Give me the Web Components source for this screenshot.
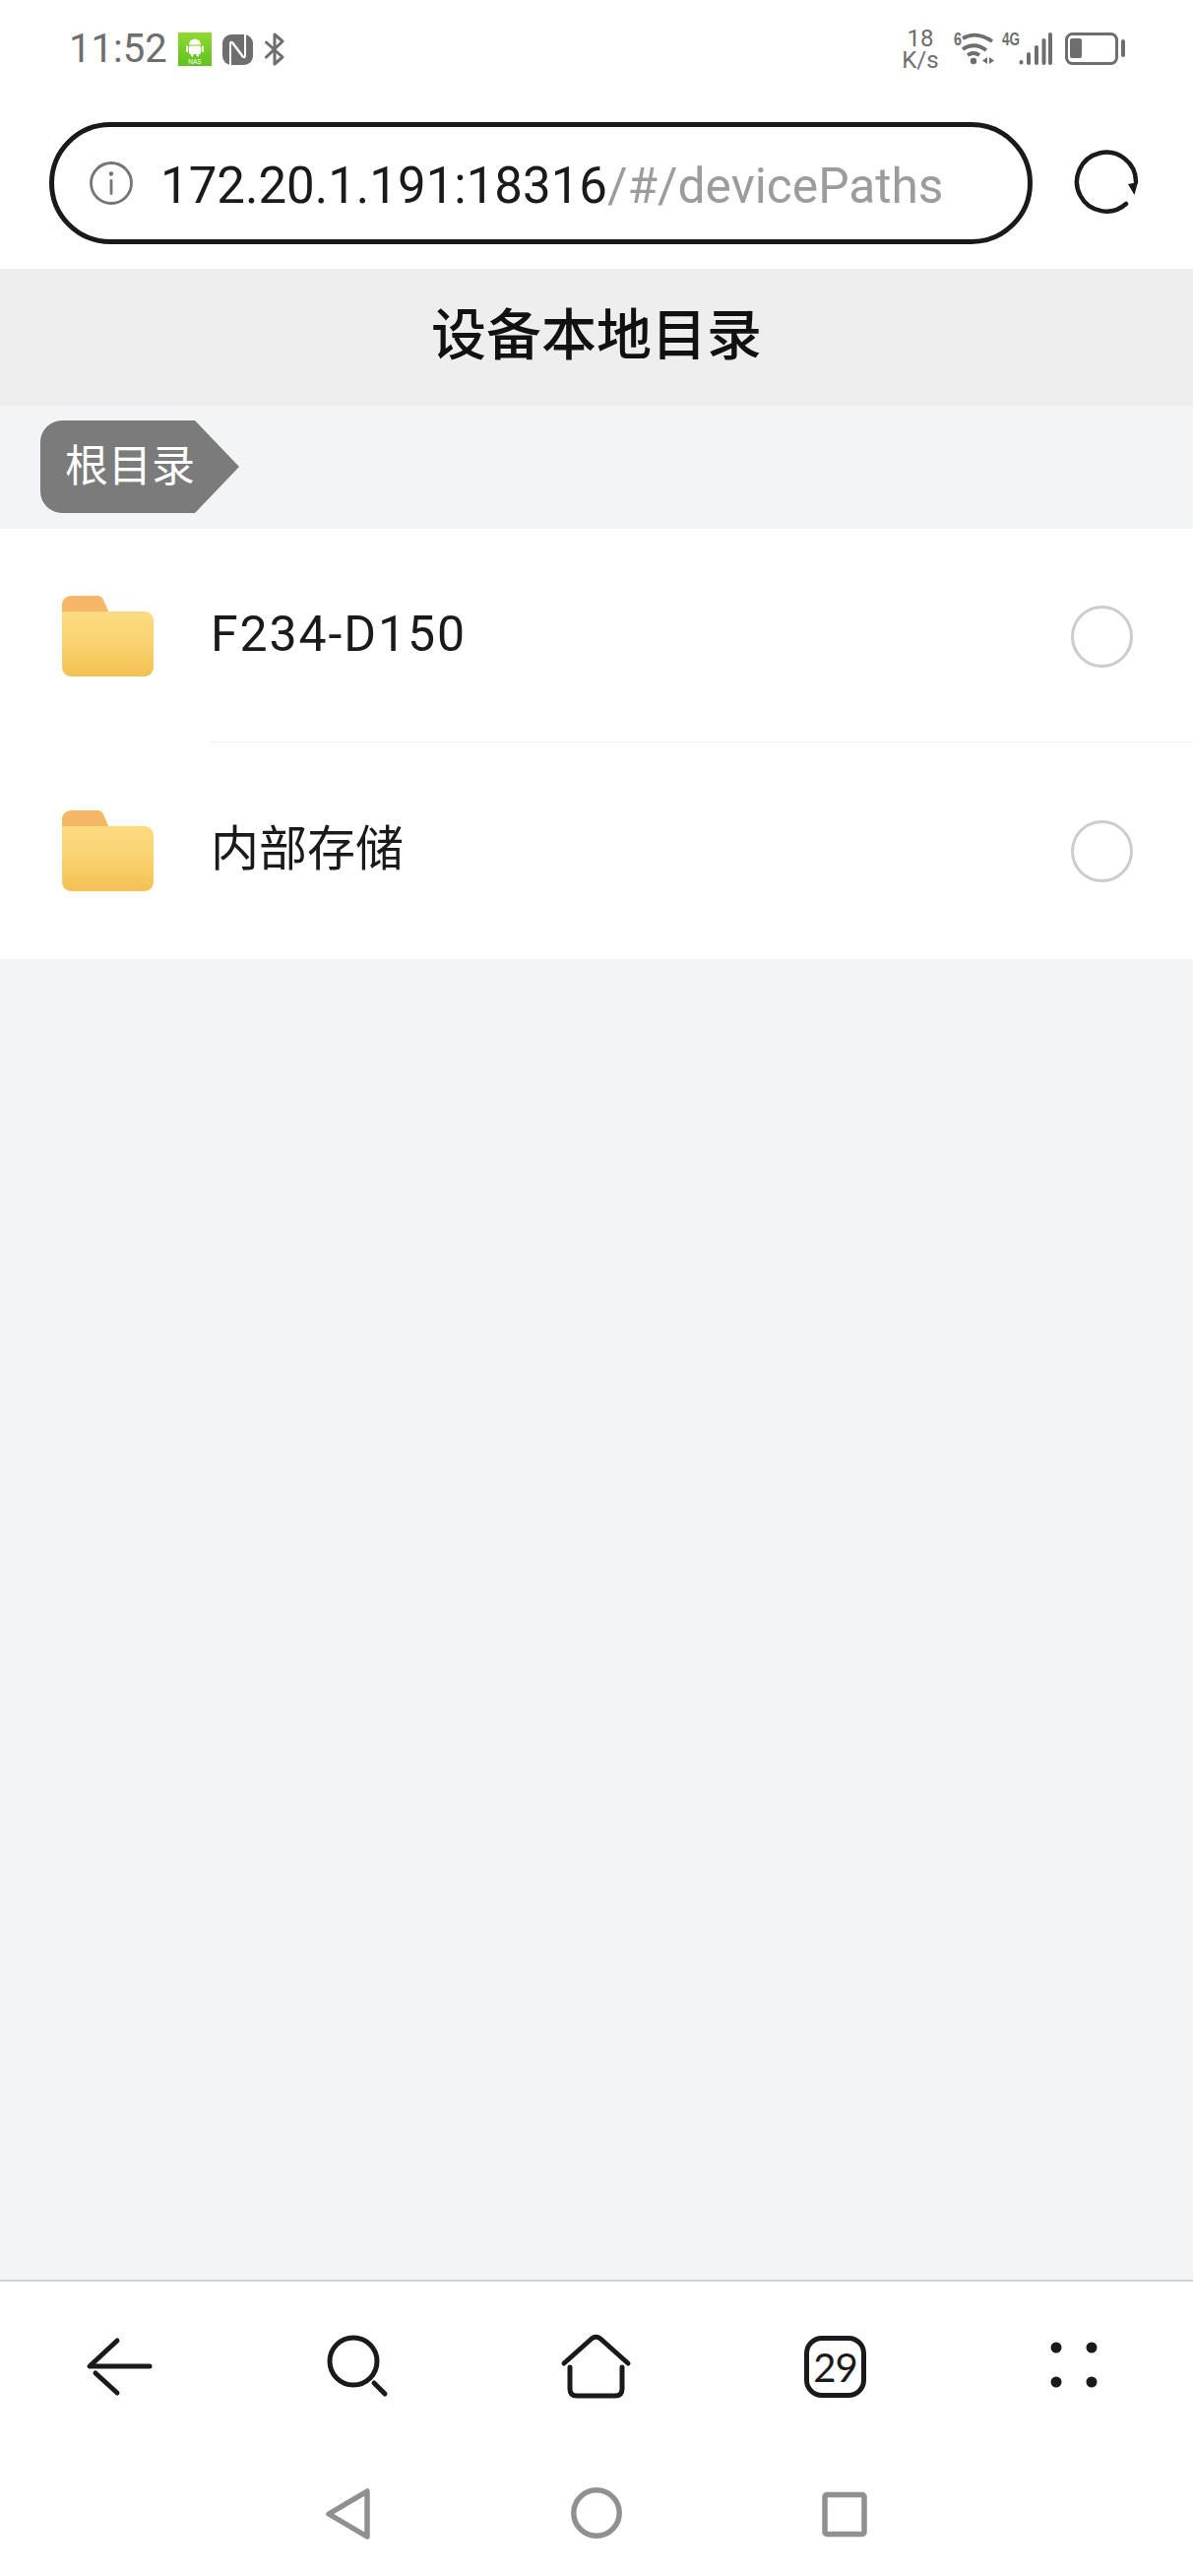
<!DOCTYPE html>
<html lang="zh">
<head>
<meta charset="utf-8">
<title>设备本地目录</title>
<style>
  html, body { margin: 0; padding: 0; background: #fff; }
  body { font-family: Roboto, "Noto Sans CJK SC", sans-serif; color: #1a1a1a; }
  .page { width: 1212px; height: 2616px; display: flex; flex-direction: column; overflow: hidden; }
  .fill { flex: 1; background: #f3f4f6; }
</style>
</head>
<body>
<div class="page">
  <status-bar></status-bar>
  <url-bar><span>172.20.1.191:18316</span><span slot="rest">/#/devicePaths</span></url-bar>
  <page-title>设备本地目录</page-title>
  <crumb-bar>根目录</crumb-bar>
  <file-list>
    <file-row first>F234-D150</file-row>
    <file-row>内部存储</file-row>
  </file-list>
  <div class="fill"></div>
  <bottom-toolbar tabs="29"></bottom-toolbar>
  <system-nav></system-nav>
</div>
<script>
class StatusBar extends HTMLElement {
  connectedCallback() {
    this.attachShadow({ mode: 'open' });
    this.shadowRoot.innerHTML = `
      <style>
        :host { display: flex; align-items: center; height: 100px; padding: 0 68px 0 70px; color: #6e6e6e; font-family: Roboto, sans-serif; }
        .time { font-size: 40px; line-height: 40px; margin-right: 11px; }
        .left { display: flex; align-items: center; }
        .nfc { margin-left: 11px; }
        .bt { margin-left: 11px; }
        .right { margin-left: auto; display: flex; align-items: center; }
        /* one text wrapped onto two lines, like the phone draws it */
        .speed { width: 38px; margin-right: 14px; font-size: 24px; line-height: 22px; text-align: center; }
        svg { display: block; }
        .sig { margin-left: 6px; }
        .bat { margin-left: 12px; }
        text { font-family: "Liberation Sans", sans-serif; font-weight: 700; fill: #6e6e6e; }
      </style>
      <div class="left">
        <span class="time">11:52</span>
        <svg width="34" height="34" viewBox="0 0 34 34">
          <defs><linearGradient id="nas" x1="0" y1="0" x2="0" y2="1"><stop offset="0" stop-color="#8ed92f"/><stop offset="1" stop-color="#62c020"/></linearGradient></defs>
          <rect width="34" height="34" fill="url(#nas)"/>
          <g fill="#fff">
            <path d="M11 12.500a6 6 0 0 1 12 0z"/>
            <rect x="11" y="13.500" width="12" height="8.500" rx="1.500"/>
            <rect x="8" y="13.500" width="2.200" height="6.500" rx="1.100"/>
            <rect x="23.800" y="13.500" width="2.200" height="6.500" rx="1.100"/>
            <rect x="13" y="21" width="2.400" height="3.500" rx="1"/>
            <rect x="18.600" y="21" width="2.400" height="3.500" rx="1"/>
          </g>
          <text x="17" y="31.500" text-anchor="middle" font-size="6.500" style="fill:#fff;font-weight:400">NAS</text>
        </svg>
        <svg class="nfc" width="31" height="31" viewBox="0 0 31 31">
          <rect width="31" height="31" rx="9" fill="#6e6e6e"/>
          <path d="M8 31V9.500Q8 6.500 10.500 8.500L21.500 23" fill="none" stroke="#fff" stroke-width="2"/>
          <path d="M23 0V21.500Q23 24.500 20.500 22.500L9.500 8" fill="none" stroke="#fff" stroke-width="2"/>
        </svg>
        <svg class="bt" width="22" height="34" viewBox="0 0 22 34">
          <path d="M2.500 10 19 25 11 32V2l8 7L2.500 25" fill="none" stroke="#6e6e6e" stroke-width="3" stroke-linejoin="round" stroke-linecap="round"/>
        </svg>
      </div>
      <div class="right">
        <div class="speed">18 K/s</div>
        <svg width="44" height="40" viewBox="968 30 44 40">
          <text x="969" y="46" font-size="18" textLength="8" lengthAdjust="spacingAndGlyphs">6</text>
          <g fill="none" stroke="#6e6e6e" stroke-width="3.800">
            <path d="M978 39q14-8 30 3"/>
            <path d="M978 50q12-8 24 1"/>
            <path d="M983 56q6-4 12 0"/>
          </g>
          <circle cx="989" cy="62" r="3.200" fill="#6e6e6e"/>
          <path d="M1003 58v7l-5-3.500zM1005 58v7l5-3.500z" fill="#6e6e6e"/>
        </svg>
        <svg class="sig" width="52" height="40" viewBox="1018 30 52 40">
          <text x="1018" y="46" font-size="18" textLength="18" lengthAdjust="spacingAndGlyphs">4G</text>
          <g fill="none" stroke="#6e6e6e" stroke-width="4" stroke-linecap="round">
            <path d="M1037.500 63v.5M1045 55v9M1053 48v16M1060.500 41v23M1067 35v29"/>
          </g>
        </svg>
        <svg class="bat" width="62" height="40" viewBox="1082 30 62 40">
          <rect x="1083.500" y="34.500" width="51" height="30" rx="6" fill="none" stroke="#6e6e6e" stroke-width="3"/>
          <rect x="1087" y="39" width="12" height="20" rx="2" fill="#6e6e6e"/>
          <rect x="1139" y="40" width="4" height="18" rx="2" fill="#6e6e6e"/>
        </svg>
      </div>
    `;
  }
}
customElements.define('status-bar', StatusBar);

class UrlBar extends HTMLElement {
  connectedCallback() {
    this.attachShadow({ mode: 'open' });
    this.shadowRoot.innerHTML = `
      <style>
        :host { display: flex; align-items: center; padding: 24px 0 25px 50px; background: #fff; font-family: Roboto, sans-serif; }
        .pill { box-sizing: border-box; width: 999px; height: 124px; border: 5px solid #1a1a1a; border-radius: 62px; display: flex; align-items: center; padding-left: 36px; }
        .info { display: block; margin-right: 28px; }
        .addr { font-size: 51px; color: #1a1a1a; white-space: nowrap; padding-top: 4px; }
        .rest { color: #9c9c9c; font-size: 49.700px; }
        .reload { display: block; margin-left: 40px; }
      </style>
      <div class="pill">
        <svg class="info" width="44" height="44" viewBox="0 0 44 44">
          <circle cx="22" cy="22" r="20.500" fill="none" stroke="#757575" stroke-width="2.800"/>
          <circle cx="22" cy="12.500" r="2.200" fill="#757575"/>
          <rect x="20.600" y="18" width="2.800" height="16" rx="1.400" fill="#757575"/>
        </svg>
        <div class="addr"><slot></slot><span class="rest"><slot name="rest"></slot></span></div>
      </div>
      <svg class="reload" width="70" height="70" viewBox="0 0 70 70">
        <path d="M65 34A30 30 0 1 0 55 56" fill="none" stroke="#1a1a1a" stroke-width="4.500" stroke-linecap="round"/>
        <path d="M57 36 67 34 63.500 47z" fill="#1a1a1a"/>
      </svg>
    `;
  }
}
customElements.define('url-bar', UrlBar);

class PageTitle extends HTMLElement {
  connectedCallback() {
    this.attachShadow({ mode: 'open' });
    this.shadowRoot.innerHTML = `
      <style>
        :host { display: flex; align-items: center; justify-content: center; box-sizing: border-box; height: 139px; padding-bottom: 15px; background: #eeeeee; color: #111; font: 500 56px "Noto Sans CJK SC", sans-serif; }
      </style>
      <slot></slot>
    `;
  }
}
customElements.define('page-title', PageTitle);

class CrumbBar extends HTMLElement {
  connectedCallback() {
    this.attachShadow({ mode: 'open' });
    this.shadowRoot.innerHTML = `
      <style>
        :host { display: flex; height: 125px; box-sizing: border-box; padding: 15px 0 16px 41px; background: #f3f4f6; font: 400 44px "Noto Sans CJK SC", sans-serif; color: #fff; }
        .tag { display: flex; align-items: center; box-sizing: border-box; width: 157px; padding: 0 0 8px 25px; background: #7b7b7b; border-radius: 22px 0 0 22px; white-space: nowrap; }
        .tip { width: 45px; background: #7b7b7b; clip-path: polygon(0 0, 100% 50%, 0 100%); }
      </style>
      <div class="tag"><slot></slot></div>
      <div class="tip"></div>
    `;
  }
}
customElements.define('crumb-bar', CrumbBar);

class FileList extends HTMLElement {
  connectedCallback() {
    this.attachShadow({ mode: 'open' });
    this.shadowRoot.innerHTML = `
      <style>
        :host { display: flex; flex-direction: column; background: #fff; }
      </style>
      <slot></slot>
    `;
  }
}
customElements.define('file-list', FileList);

let folderCount = 0;
class FileRow extends HTMLElement {
  connectedCallback() {
    const id = 'fold' + (folderCount++);
    this.attachShadow({ mode: 'open' });
    this.shadowRoot.innerHTML = `
      <style>
        :host { display: flex; align-items: stretch; height: 220px; padding-left: 63px; font: 400 49px Roboto, "Noto Sans CJK SC", sans-serif; color: #1a1a1a; }
        :host([first]) { height: 217px; font-size: 50px; letter-spacing: 1.900px; }
        .icon { display: flex; align-items: center; width: 151px; flex: none; }
        .icon svg { display: block; }
        .body { flex: 1; display: flex; align-items: center; justify-content: space-between; padding-right: 61px; }
        :host([first]) .body { border-bottom: 1px solid #eeeeee; }
        :host([first]) .radio { position: relative; top: 1px; }
        .name { margin-top: -14px; }
        :host([first]) .name { margin-top: -3px; }
        .radio { box-sizing: border-box; width: 63px; height: 63px; border: 3px solid #cccccc; border-radius: 50%; }
      </style>
      <div class="icon">
        <svg width="93" height="82" viewBox="0 0 93 82">
          <defs><linearGradient id="${id}" x1="0" y1="0" x2="0" y2="1"><stop offset="0" stop-color="#fdda80"/><stop offset=".35" stop-color="#fbd677"/><stop offset="1" stop-color="#f4c152"/></linearGradient></defs>
          <path d="M0 20V9a9 9 0 0 1 9-9H36a7 7 0 0 1 6 4l7 16z" fill="#f6b668"/>
          <path d="M0 16H84a9 9 0 0 1 9 9V73a9 9 0 0 1-9 9H9a9 9 0 0 1-9-9z" fill="url(#${id})"/>
        </svg>
      </div>
      <div class="body">
        <span class="name"><slot></slot></span>
        <span class="radio"></span>
      </div>
    `;
  }
}
customElements.define('file-row', FileRow);

class BottomToolbar extends HTMLElement {
  connectedCallback() {
    const tabs = this.getAttribute('tabs');
    this.attachShadow({ mode: 'open' });
    this.shadowRoot.innerHTML = `
      <style>
        :host { display: grid; grid-template-columns: repeat(5, 1fr); justify-items: center; padding-top: 46px; border-top: 2px solid #cfd1d4; background: #fff; }
        svg { display: block; width: 80px; height: 80px; fill: none; stroke: #1a1a1a; stroke-width: 5; stroke-linecap: round; stroke-linejoin: round; }
        .tabs { box-sizing: border-box; width: 63px; height: 63px; margin: 9px 0 8px; border: 5px solid #1a1a1a; border-radius: 18px; display: flex; align-items: center; justify-content: center; font: 400 40px Lato, sans-serif; color: #1a1a1a; letter-spacing: -1px; }
      </style>
      <svg viewBox="0 0 80 80"><path d="M38 14 10 40H71M16 47 38 67"/></svg>
      <svg viewBox="0 0 80 80"><circle cx="35" cy="35" r="24"/><path d="M56 57 67 68"/></svg>
      <svg viewBox="0 0 80 80"><path d="M7 37 35 12Q39.500 8.500 44 12L72 37"/><path d="M13 41V63Q13 70 20 70H59Q66 70 66 63V41"/></svg>
      <div class="tabs">${tabs}</div>
      <svg viewBox="0 0 80 80" style="stroke:none;fill:#1a1a1a"><circle cx="22" cy="21" r="5.500"/><circle cx="58" cy="21" r="5.500"/><circle cx="22" cy="56" r="5.500"/><circle cx="58" cy="56" r="5.500"/></svg>
    `;
  }
}
customElements.define('bottom-toolbar', BottomToolbar);

class SystemNav extends HTMLElement {
  connectedCallback() {
    this.attachShadow({ mode: 'open' });
    this.shadowRoot.innerHTML = `
      <style>
        :host { display: flex; justify-content: center; gap: 172px; padding: 70px 0 23px; background: #fff; }
        svg { display: block; width: 80px; height: 80px; fill: none; stroke: #909090; stroke-width: 5.500; stroke-linejoin: round; }
      </style>
      <svg viewBox="0 0 80 80"><path d="M20 40 59 17V63z"/></svg>
      <svg viewBox="0 0 80 80"><circle cx="40" cy="39" r="23.200"/></svg>
      <svg viewBox="0 0 80 80"><rect x="20" y="20.500" width="40" height="40" rx="2"/></svg>
    `;
  }
}
customElements.define('system-nav', SystemNav);
</script>
</body>
</html>
